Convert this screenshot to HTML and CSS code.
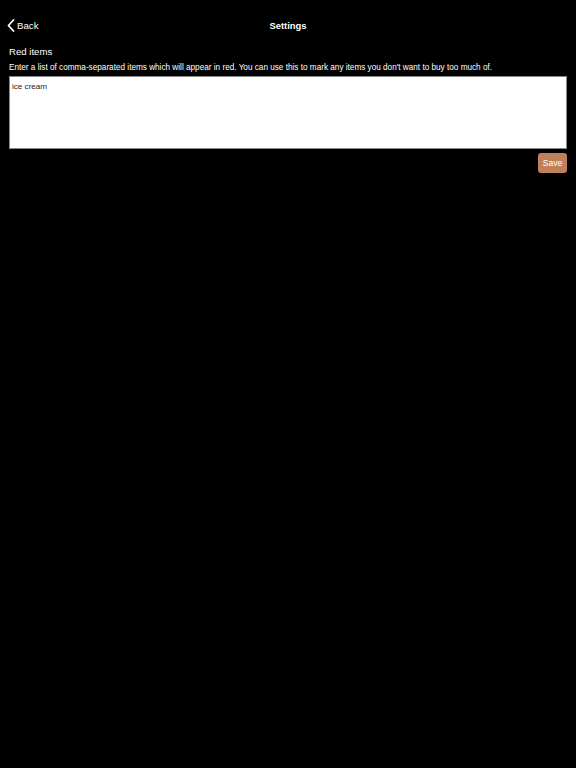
FILE: index.html
```html
<!DOCTYPE html>
<html>
<head>
<meta charset="utf-8">
<link rel="stylesheet" href="styles.css">
</head>
<body>
<header class="navbar">
  <a class="back">
    <svg class="chev" width="8" height="13" viewBox="0 0 8 13"><path d="M6.5 1 L1.5 6.5 L6.5 12" fill="none" stroke="#fff" stroke-width="1.8" stroke-linecap="round" stroke-linejoin="round"/></svg>
    <span>Back</span>
  </a>
  <div class="title">Settings</div>
</header>
<main class="content">
  <div class="label">Red items</div>
  <div class="desc">Enter a list of comma-separated items which will appear in red. You can use this to mark any items you don't want to buy too much of.</div>
  <div class="textarea">ice cream</div>
  <div class="actions"><button class="save">Save</button></div>
</main>
</body>
</html>
```
FILE: styles.css
```css
html, body {
  margin: 0;
  padding: 0;
  background: #000;
  color: #fff;
  font-family: "Liberation Sans", Arial, sans-serif;
}
.navbar {
  position: relative;
  height: 51px;
  display: flex;
  align-items: center;
  justify-content: center;
}
.back {
  position: absolute;
  left: 7px;
  top: 19px;
  display: flex;
  align-items: center;
  gap: 2px;
  font-size: 9.7px;
  color: #fff;
}
.chev { display: block; }
.title {
  font-size: 9.4px;
  font-weight: bold;
}
.content {
  padding: 0 9px;
}
.label {
  font-size: 9.6px;
  line-height: 14px;
  margin-top: -6px;
}
.desc {
  font-size: 8.2px;
  line-height: 12px;
  margin-top: 3px;
  white-space: nowrap;
}
.textarea {
  margin-top: 2px;
  background: #fff;
  border: 1px solid #888;
  color: #222;
  font-size: 8.1px;
  padding: 5px 2px 4px;
  box-sizing: border-box;
  height: 73px;
}
.actions {
  display: flex;
  justify-content: flex-end;
  margin-top: 4px;
}
.save {
  background: #c0805a;
  color: #fff;
  border: none;
  border-radius: 3px;
  font-family: inherit;
  font-size: 8.5px;
  height: 20px;
  width: 29px;
  padding: 0;
}
```
